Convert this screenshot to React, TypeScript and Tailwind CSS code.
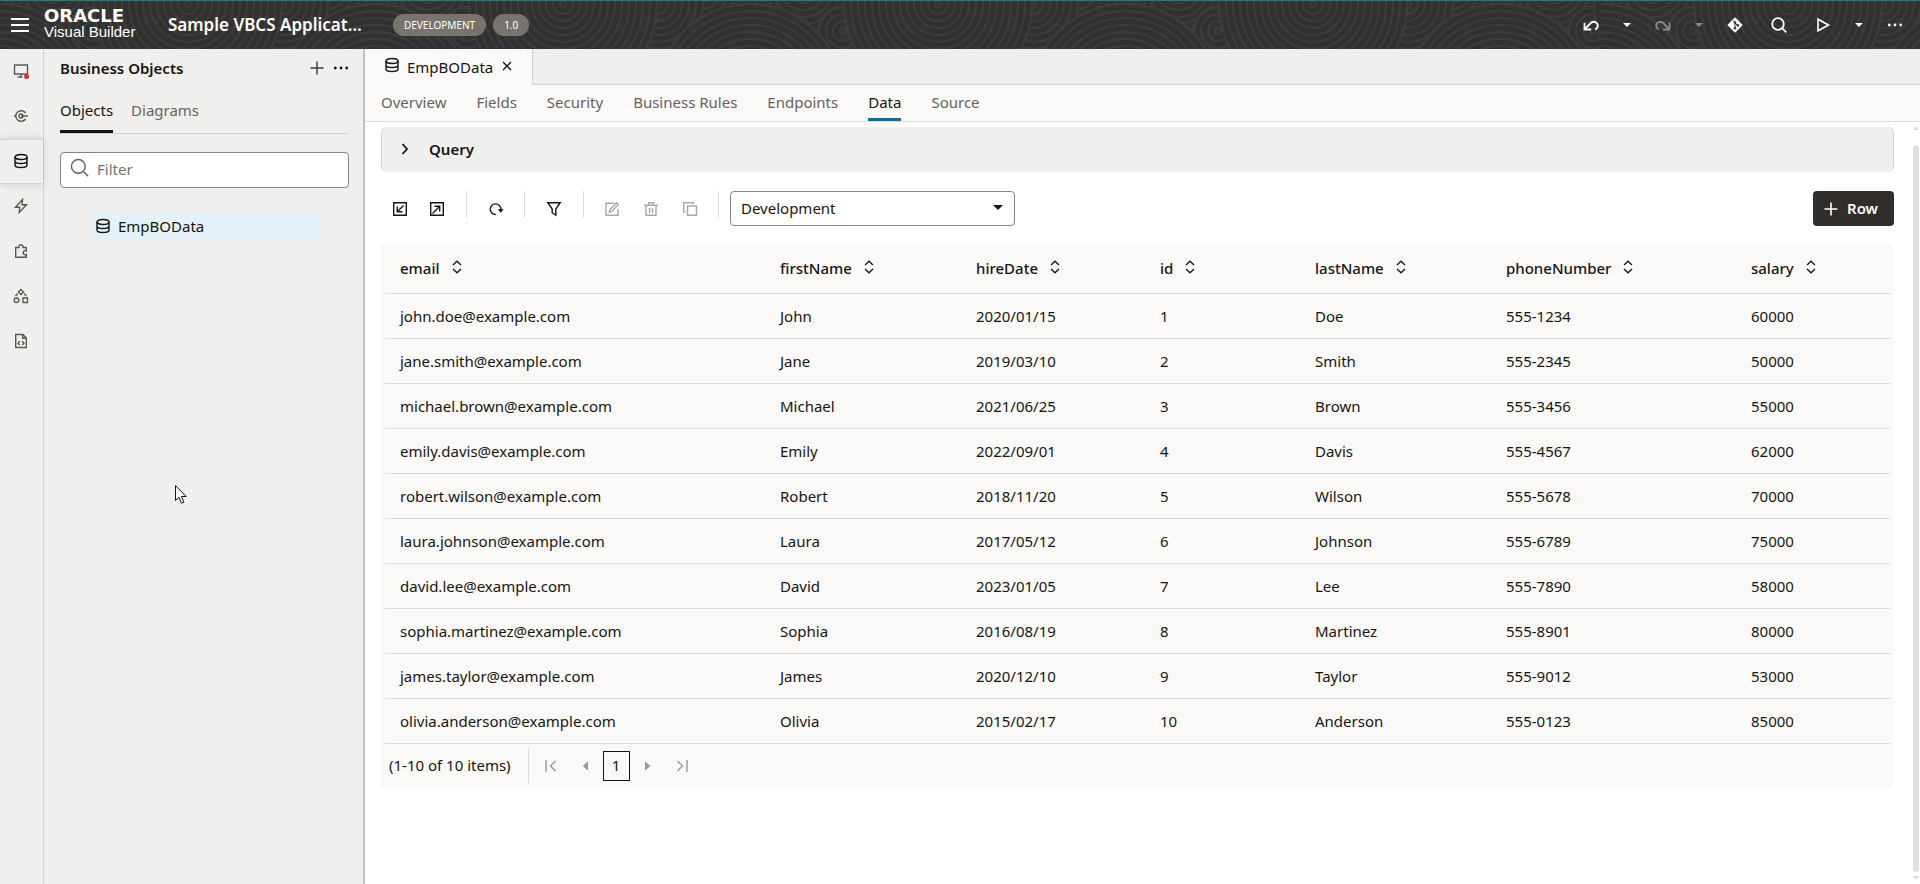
import React from "react";

type IconProps = { className?: string; size?: number; children: React.ReactNode; sw?: number };

function Icon({ className = "", size = 16, sw = 1.4, children }: IconProps) {
  return (
    <svg
      className={`shrink-0 ${className}`}
      width={size}
      height={size}
      viewBox="0 0 16 16"
      fill="none"
      stroke="currentColor"
      strokeWidth={sw}
      aria-hidden="true"
    >
      {children}
    </svg>
  );
}

const DatabaseIcon = ({ className = "" }: { className?: string }) => (
  <Icon className={className}>
    <ellipse cx="8" cy="4" rx="6" ry="2.5" />
    <path d="M2 4v8c0 1.4 2.7 2.5 6 2.5s6-1.1 6-2.5V4M2 8c0 1.4 2.7 2.5 6 2.5s6-1.1 6-2.5" />
  </Icon>
);
const SearchIcon = ({ size = 16, sw = 1.4, className = "" }: { size?: number; sw?: number; className?: string }) => (
  <Icon size={size} sw={sw} className={className}>
    <circle cx="7" cy="7" r="5.8" />
    <path d="M11.100 11.100 15.300 15.300" />
  </Icon>
);
const PlusIcon = ({ sw = 1.4 }: { sw?: number }) => (
  <Icon sw={sw}>
    <path d="M8 1.5v13M1.5 8h13" />
  </Icon>
);
const DotsIcon = () => (
  <Icon>
    <g fill="currentColor" stroke="none">
      <circle cx="2.3" cy="8" r="1.4" />
      <circle cx="8" cy="8" r="1.4" />
      <circle cx="13.7" cy="8" r="1.4" />
    </g>
  </Icon>
);
const CaretIcon = () => (
  <svg className="shrink-0" width="8" height="4" viewBox="0 0 8 4" fill="currentColor" aria-hidden="true">
    <path d="M0 0h8L4 4z" />
  </svg>
);
const UndoIcon = ({ flip = false }: { flip?: boolean }) => (
  <Icon sw={1.8} className={flip ? "-scale-x-100" : ""}>
    <path d="M1.500 5.800v6.700h6.700M2 12l5.800-6c2.500-2.400 7-1 7 2.600 0 1.900-1.100 3.200-2.600 3.900" />
  </Icon>
);

function rings(cx: number, cy: number, r: number, key: string) {
  const out = [<circle key={key + "d"} cx={cx} cy={cy} r={r} fill="#323131" />];
  for (let q = r; q > 2; q -= 7) out.push(<circle key={key + q} cx={cx} cy={cy} r={q} />);
  return out;
}

function HeaderPattern({ id, start, className }: { id: string; start: number; className: string }) {
  return (
    <svg className={`absolute top-0 right-0 h-full ${className}`} aria-hidden="true">
      <defs>
        <pattern id={id} x={start} y="0" width="375" height="98" patternUnits="userSpaceOnUse">
          <rect width="375" height="98" fill="#323131" />
          <g fill="none" stroke="#3d3c3b" strokeWidth="2">
            {rings(240, -15, 80, "e")}
            {rings(136, -15, 80, "f")}
            {rings(95, 3, 45, "b")}
            {rings(280, 30, 24, "g")}
            {rings(187, 97, 94, "c")}
            {rings(0, 3, 94, "a")}
            {rings(375, 3, 94, "h")}
          </g>
        </pattern>
      </defs>
      <rect width="100%" height="100%" fill={`url(#${id})`} />
    </svg>
  );
}

function Header() {
  return (
    <header className="relative flex h-[49px] shrink-0 items-center border-t border-[#1b7f88] bg-[#323131] text-white">
      <HeaderPattern id="waves" start={188} className="w-full" />
      <HeaderPattern id="waves-end" start={188} className="w-80" />
      <div className="relative flex w-full items-center pr-[17px] pl-2.5">
        <button aria-label="Menu" className="flex w-5 flex-col items-center gap-1">
          <span className="h-0.5 w-[18px] bg-white" />
          <span className="h-0.5 w-[18px] bg-white" />
          <span className="h-0.5 w-[18px] bg-white" />
        </button>
        <div className="ml-3.5 flex w-[92px] flex-col pb-0.5">
          <span className="font-['DejaVu_Sans'] text-[18px] leading-4 font-bold">ORACLE</span>
          <span className="font-['Liberation_Sans'] text-[15px] leading-4 whitespace-nowrap">Visual Builder</span>
        </div>
        <h1 className="ml-8 w-[200px] pb-px text-[17px] leading-6 font-semibold whitespace-nowrap">Sample VBCS Applicat...</h1>
        <span className="ml-[25px] rounded-full bg-[#79736d] px-[11px] text-[10px] leading-[22px]">DEVELOPMENT</span>
        <span className="ml-[7px] rounded-full bg-[#79736d] px-[11px] text-[10px] leading-[22px]">1.0</span>
        <div className="ml-auto flex items-center">
          <button aria-label="Undo"><UndoIcon /></button>
          <button aria-label="Undo history" className="ml-6"><CaretIcon /></button>
          <button aria-label="Redo" className="ml-6 text-[#8b8886]"><UndoIcon flip /></button>
          <button aria-label="Redo history" className="ml-6 text-[#8b8886]"><CaretIcon /></button>
          <button aria-label="Git" className="ml-6">
            <svg width="16" height="16" viewBox="0 0 16 16" aria-hidden="true">
              <path d="M8 .3 15.700 8 8 15.700.3 8z" fill="#fff" />
              <path d="M6 3.500 8 5.500v6M8 6l2.800 2.500" stroke="#323131" fill="none" />
              <circle cx="8" cy="5.500" r="1.300" fill="#323131" />
              <circle cx="8" cy="11.200" r="1.300" fill="#323131" />
              <circle cx="10.800" cy="8.400" r="1.300" fill="#323131" />
            </svg>
          </button>
          <button aria-label="Search" className="ml-7"><SearchIcon sw={1.8} /></button>
          <button aria-label="Run" className="ml-7">
            <Icon sw={1.6}><path d="M3 2.200v11.600L13.500 8z" /></Icon>
          </button>
          <button aria-label="Run options" className="ml-6"><CaretIcon /></button>
          <button aria-label="More" className="ml-6"><DotsIcon /></button>
        </div>
      </div>
    </header>
  );
}

const railItems = [
  {
    label: "Web Applications",
    icon: (
      <Icon>
        <path d="M1.500 2h13v9h-13zM8 11v3M4.500 14h5" />
        <circle cx="13.500" cy="13.500" r="2.500" fill="#d6302a" stroke="none" />
      </Icon>
    ),
  },
  {
    label: "Services",
    icon: (
      <Icon>
        <path d="M12.500 5A5.300 5.300 0 1 0 12.500 11M1 8h2M8 8h7" />
        <circle cx="8" cy="8" r="2" />
      </Icon>
    ),
  },
  { label: "Business Objects", icon: <DatabaseIcon />, active: true },
  { label: "Processes", icon: <Icon><path d="M9.500 1.500 2.500 9.200h4.200L6.200 14.500l7.300-7.700H9z" /></Icon> },
  {
    label: "Components",
    icon: (
      <Icon>
        <path d="M2.700 4.500h3.200a2.100 2.100 0 1 1 4 0h3.400v3.300a2.100 2.100 0 1 0 0 3.700v2.800H2.700z" />
      </Icon>
    ),
  },
  {
    label: "Diagrams",
    icon: (
      <Icon>
        <path d="m8 1.500 2.500 2.500L8 6.500 5.500 4zM10 10h4.500v4.500H10zM4.800 5.500 2.500 8M11.200 5.500 13.200 8" />
        <circle cx="3.500" cy="12.300" r="2.300" />
      </Icon>
    ),
  },
  {
    label: "Source",
    icon: (
      <Icon>
        <path d="M2.700 1.500h7.300l3.300 3.500v9.500H2.700zM9.700 1.500v3.800h3.600M6.800 8.300 5 10.200l1.800 1.900M9.200 8.300l1.800 1.900-1.800 1.900" />
      </Icon>
    ),
  },
];

function Rail() {
  return (
    <nav aria-label="Navigator" className="flex w-11 shrink-0 flex-col border-r border-[#d4d2d0] text-[#5b5854]">
      {railItems.map((item) => (
        <button
          key={item.label}
          aria-label={item.label}
          className={
            item.active
              ? "flex h-[45px] items-center justify-center border-y border-[#d4d2d0] pr-px pb-0.5 text-[#161513] shadow-[0_0_8px_rgba(0,0,0,0.16)]"
              : "flex h-[45px] items-center justify-center pr-px pb-0.5"
          }
        >
          {item.icon}
        </button>
      ))}
    </nav>
  );
}

function ObjectsPanel() {
  return (
    <aside className="flex w-[319px] shrink-0 flex-col pr-[14px] pl-4">
      <div className="flex h-[38px] items-center">
        <h2 className="text-[15px] leading-5 font-semibold">Business Objects</h2>
        <button aria-label="Add" className="ml-auto text-[#3b3835]"><PlusIcon /></button>
        <button aria-label="More actions" className="ml-2"><DotsIcon /></button>
      </div>
      <div role="tablist" className="flex h-[47px] gap-[18px] border-b border-[#d4d2d0] text-[15px] leading-5">
        <button role="tab" aria-selected="true" className="border-b-3 border-[#161513] pt-0.5">Objects</button>
        <button role="tab" aria-selected="false" className="pb-px text-[#66625e]">Diagrams</button>
      </div>
      <label className="mt-[18px] flex h-9 items-center rounded border border-[#8b8580] bg-white pl-[9px] text-[#66625e]">
        <SearchIcon size={19} sw={1.2} className="mb-1.5" />
        <input
          aria-label="Filter"
          placeholder="Filter"
          className="ml-2 min-w-0 flex-1 bg-transparent pb-0.5 text-[15px] outline-none placeholder:text-[#76716c]"
        />
      </label>
      <ul className="mt-[23px] mr-[29px] ml-[31px]">
        <li>
          <a href="#EmpBOData" className="flex h-[30px] items-center gap-[7px] bg-[#e4f1f7] pl-1 text-[15px]">
            <DatabaseIcon />
            EmpBOData
          </a>
        </li>
      </ul>
    </aside>
  );
}

const sections = ["Overview", "Fields", "Security", "Business Rules", "Endpoints", "Data", "Source"];

const columns = [
  { name: "email", width: "w-[380px]" },
  { name: "firstName", width: "w-[196px]" },
  { name: "hireDate", width: "w-[184px]" },
  { name: "id", width: "w-[155px]" },
  { name: "lastName", width: "w-[191px]" },
  { name: "phoneNumber", width: "w-[245px]" },
  { name: "salary", width: "w-[155px]" },
];

const rows = [
  ["john.doe@example.com", "John", "2020/01/15", "1", "Doe", "555-1234", "60000"],
  ["jane.smith@example.com", "Jane", "2019/03/10", "2", "Smith", "555-2345", "50000"],
  ["michael.brown@example.com", "Michael", "2021/06/25", "3", "Brown", "555-3456", "55000"],
  ["emily.davis@example.com", "Emily", "2022/09/01", "4", "Davis", "555-4567", "62000"],
  ["robert.wilson@example.com", "Robert", "2018/11/20", "5", "Wilson", "555-5678", "70000"],
  ["laura.johnson@example.com", "Laura", "2017/05/12", "6", "Johnson", "555-6789", "75000"],
  ["david.lee@example.com", "David", "2023/01/05", "7", "Lee", "555-7890", "58000"],
  ["sophia.martinez@example.com", "Sophia", "2016/08/19", "8", "Martinez", "555-8901", "80000"],
  ["james.taylor@example.com", "James", "2020/12/10", "9", "Taylor", "555-9012", "53000"],
  ["olivia.anderson@example.com", "Olivia", "2015/02/17", "10", "Anderson", "555-0123", "85000"],
];

const Separator = () => <span className="h-[27px] w-px self-start bg-[#dedcda]" />;

function ToolButton({ label, disabled, children }: { label: string; disabled?: boolean; children: React.ReactNode }) {
  return (
    <button aria-label={label} disabled={disabled} className="flex w-[39px] justify-center disabled:text-[#aaa7a5]">
      <Icon>{children}</Icon>
    </button>
  );
}

function Toolbar() {
  return (
    <div className="mt-[19px] flex h-[35px] items-center">
      <div className="flex w-[85px] pr-2.5">
        <ToolButton label="Import">
          <path d="M1.700 1.700h12.600v12.600H1.700zM11.500 4.500 6 10M5.300 5.500v5.200h5.200" />
        </ToolButton>
        <ToolButton label="Export">
          <path d="M1.700 1.700h12.600v12.600H1.700zM3.500 12.500 10 6M5.500 5.300h5.200v5.200" />
        </ToolButton>
      </div>
      <Separator />
      <div className="flex w-[57px] justify-center">
        <ToolButton label="Refresh">
          <path d="M7.800 13.500A5.300 5.300 0 1 1 12.800 9" />
          <path d="M9.800 8.300h5.800l-2.900 3.400z" fill="currentColor" stroke="none" />
        </ToolButton>
      </div>
      <Separator />
      <div className="flex w-[58px] justify-center">
        <ToolButton label="Filter">
          <path d="M1.800 1.700h12.400L9.800 8v6.200l-3.600-2.500V8z" />
        </ToolButton>
      </div>
      <Separator />
      <div className="flex w-[134px] pl-2">
        <ToolButton label="Edit row" disabled>
          <path d="M10 2.200H2v12h12V8M12.500 1.700l1.800 1.800-6.500 7-2.600.8.700-2.600z" />
        </ToolButton>
        <ToolButton label="Delete row" disabled>
          <path d="M1 4.200h14M5.500 4V1.700h5V4M3 4.500v9.800h10V4.500M6.500 7v5M9.500 7v5" />
        </ToolButton>
        <ToolButton label="Duplicate row" disabled>
          <path d="M5.500 5h9v9.300h-9zM3.500 11H1.700V1.700h9.600v1.500" />
        </ToolButton>
      </div>
      <Separator />
      <div className="relative ml-[11px] w-[285px]">
        <select
          aria-label="Environment"
          defaultValue="Development"
          className="h-[35px] w-full appearance-none rounded border border-[#8b8580] bg-white pl-2.5 text-[15px]"
        >
          <option>Development</option>
        </select>
        <svg className="pointer-events-none absolute top-3.5 right-3" width="10" height="5" viewBox="0 0 10 5" aria-hidden="true">
          <path d="M0 0h10L5 5z" fill="#161513" />
        </svg>
      </div>
      <button className="ml-auto flex h-[35px] w-[81px] items-center gap-2 rounded bg-[#312d2a] pl-2.5 text-[15px] font-semibold text-white">
        <PlusIcon sw={1.6} />
        Row
      </button>
    </div>
  );
}

function DataTable() {
  return (
    <section className="mt-[18px] bg-[#fbf9f8] pr-[3px] pl-1">
      <table className="w-full table-fixed border-collapse text-left text-[15px] leading-5">
        <thead>
          <tr className="h-[49px] border-b border-[#dedcda]">
            {columns.map((c) => (
              <th key={c.name} scope="col" className={`${c.width} px-[15px] font-medium`}>
                <span className="flex items-center gap-2.5">
                  {c.name}
                  <button aria-label={`Sort by ${c.name}`} className="pb-0.5">
                    <svg width="14" height="14" viewBox="0 0 14 14" fill="none" stroke="#161513" strokeWidth="1.3" aria-hidden="true">
                      <path d="M3 5 7 1.200 11 5M3 9l4 3.800L11 9" />
                    </svg>
                  </button>
                </span>
              </th>
            ))}
          </tr>
        </thead>
        <tbody>
          {rows.map((r) => (
            <tr key={r[0]} className="h-[45px] border-b border-[#dedcda]">
              {r.map((v, i) => (
                <td key={i} className="px-[15px]">{v}</td>
              ))}
            </tr>
          ))}
        </tbody>
      </table>
      <div className="flex h-11 items-center pl-1 text-[15px] text-[#161513]">
        <span>(1-10 of 10 items)</span>
        <span className="ml-[17px] h-[35px] w-px bg-[#dedcda]" />
        <div className="flex items-center text-[#9d9997]">
          <button disabled aria-label="First page" className="ml-3.5">
            <Icon><path d="M3 2v12M12.500 3 7.500 8l5 5" /></Icon>
          </button>
          <button disabled aria-label="Previous page" className="ml-[18px]">
            <Icon><path d="M11 3.500v9L5.500 8z" fill="currentColor" stroke="none" /></Icon>
          </button>
          <button aria-current="page" className="ml-2.5 h-[30px] w-[27px] border border-[#161513] text-[#161513]">1</button>
          <button disabled aria-label="Next page" className="ml-2.5">
            <Icon><path d="M5 3.500v9L10.500 8z" fill="currentColor" stroke="none" /></Icon>
          </button>
          <button disabled aria-label="Last page" className="ml-[18px]">
            <Icon><path d="M13 2v12M3.500 3l5 5-5 5" /></Icon>
          </button>
        </div>
      </div>
    </section>
  );
}

function Editor() {
  return (
    <main className="flex min-w-0 flex-1 flex-col border-l-2 border-[#c4c1be] bg-white">
      <div className="flex h-9 shrink-0">
        <div className="flex w-[168px] items-center border-r border-[#d4d2d0] bg-[#fbf9f8] pl-[19px] text-[15px]">
          <DatabaseIcon className="mb-1" />
          <span className="ml-[7px]">EmpBOData</span>
          <button aria-label="Close EmpBOData" className="mb-0.5 ml-1.5">
            <Icon><path d="m4 4 8 8M12 4l-8 8" /></Icon>
          </button>
        </div>
        <div className="flex-1 border-b border-[#d4d2d0] bg-[#f1efed]" />
      </div>
      <div role="tablist" className="flex h-[37px] shrink-0 gap-[30px] border-b border-[#dedcda] bg-[#fbf9f8] pl-4 text-[15px] leading-5">
        {sections.map((s) => (
          <button
            key={s}
            role="tab"
            aria-selected={s === "Data"}
            className={s === "Data" ? "border-b-3 border-[#0f7092] pt-px" : "pb-0.5 text-[#66625e]"}
          >
            {s}
          </button>
        ))}
      </div>
      <div className="flex min-h-0 flex-1">
        <div className="min-w-0 flex-1 pt-[5px] pr-[18px] pl-4">
          <button className="flex h-[45px] w-full items-center rounded-md border-x border-[#d4d2d0] bg-[#f1efed] pl-[15px] text-[15px] font-semibold">
            <Icon sw={1.8} className="mb-0.5"><path d="m5.500 3 4.500 5-4.500 5" /></Icon>
            <span className="ml-4">Query</span>
          </button>
          <Toolbar />
          <DataTable />
        </div>
        <div aria-hidden="true" className="flex w-2 flex-col items-center pt-1 pb-1 text-[#dedcda]">
          <svg width="6" height="4" viewBox="0 0 6 4" fill="currentColor"><path d="M0 4h6L3 0z" /></svg>
          <div className="mt-[15px] w-1.5 flex-1 rounded-full bg-[#e0dfde]" />
          <svg className="mt-1" width="6" height="4" viewBox="0 0 6 4" fill="currentColor"><path d="M0 0h6L3 4z" /></svg>
        </div>
      </div>
    </main>
  );
}

export default function App() {
  return (
    <div className="relative flex min-h-screen flex-col bg-[#f1efed] font-['Noto_Sans',sans-serif] text-[#161513]">
      <Header />
      <div className="flex flex-1">
        <Rail />
        <ObjectsPanel />
        <Editor />
      </div>
      <svg className="pointer-events-none absolute top-[484px] left-[174px]" width="14" height="21" viewBox="0 0 14 21" aria-hidden="true">
        <path d="M1.500 1.500v15l3.500-3.200 2.400 6 2.500-1.100-2.500-5.700h4.800z" fill="#fff" stroke="#161513" />
      </svg>
    </div>
  );
}
